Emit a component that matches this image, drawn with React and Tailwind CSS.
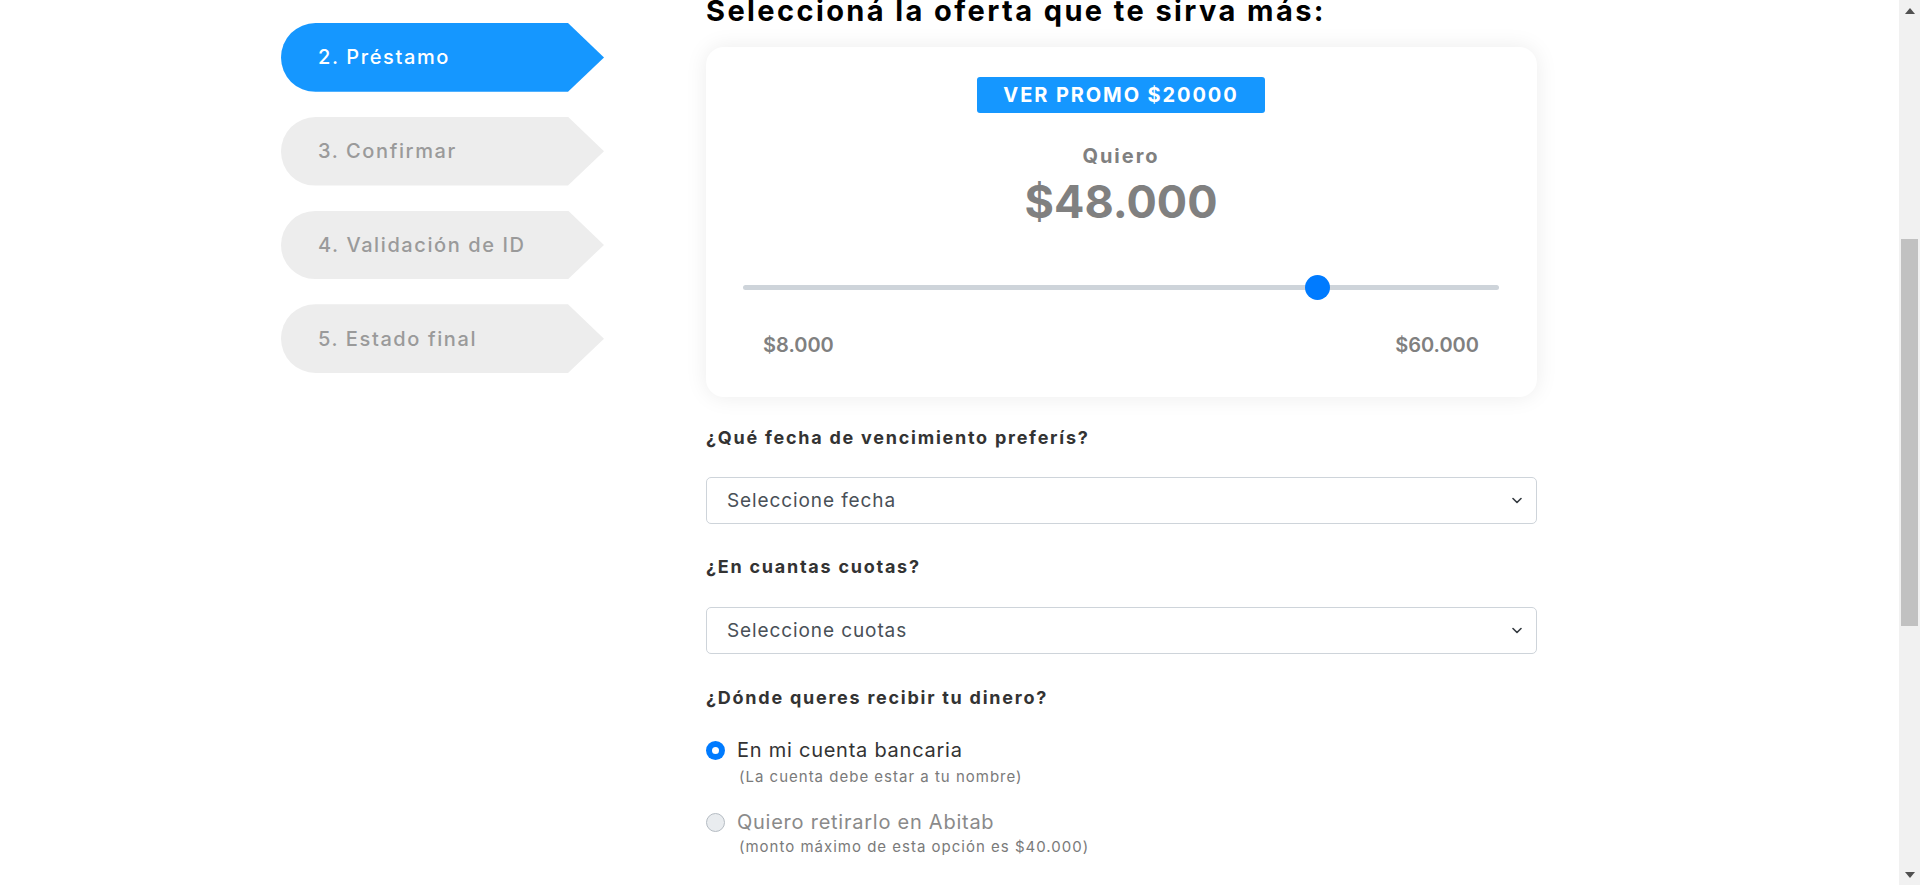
import React from "react";

const FONT = { fontFamily: "Inter, 'Noto Sans', 'DejaVu Sans', sans-serif" };

function Step({ label, active }) {
  return (
    <div
      className={
        "h-[68.75px] w-[323px] rounded-l-full flex items-center pl-[37px] text-[20px] font-medium tracking-[1.6px] [clip-path:polygon(0_0,calc(100%_-_36px)_0,100%_50%,calc(100%_-_36px)_100%,0_100%)] " +
        (active ? "bg-[#1597ff] text-white" : "bg-[#ededed] text-[#9a9a9a]")
      }
    >
      {label}
    </div>
  );
}

function Chevron() {
  return (
    <svg width="10" height="7" viewBox="0 0 10 7" className="shrink-0">
      <path d="M1 1.5 L5 5.5 L9 1.5" fill="none" stroke="#343a40" strokeWidth="1.6" strokeLinecap="round" strokeLinejoin="round" />
    </svg>
  );
}

function Select({ text }) {
  return (
    <div className="h-[47px] w-full rounded-[5px] border border-[#ced4da] bg-white flex items-center justify-between pl-[20px] pr-[14px]">
      <span className="text-[19px] tracking-[0.9px] text-[#495057] leading-[24px]">{text}</span>
      <Chevron />
    </div>
  );
}

function Slider({ value, min, max }) {
  const pct = (value - min) / (max - min);
  return (
    <div className="relative h-[25px] flex items-center">
      <div className="h-[5px] w-full rounded-full bg-[#ced4da]" />
      <div
        className="absolute top-0 h-[25px] w-[25px] rounded-full bg-[#007bff]"
        style={{ left: `calc(${pct} * (100% - 25px))` }}
      />
    </div>
  );
}

export default function App() {
  return (
    <div className="flex h-[885px] w-full overflow-hidden bg-white" style={FONT}>
      <div className="flex-1 flex pl-[281px] overflow-hidden">
        {/* Steps */}
        <div className="w-[323px] shrink-0 pt-[23px] flex flex-col gap-[25px]">
          <Step label="2. Préstamo" active />
          <Step label="3. Confirmar" />
          <Step label="4. Validación de ID" />
          <Step label="5. Estado final" />
        </div>

        {/* Main column */}
        <div className="ml-[102px] w-[831px] shrink-0 mt-[-7px] flex flex-col">
          <h1 className="text-[29px] leading-[35px] font-bold tracking-[2.4px] text-black whitespace-nowrap">
            Seleccioná la oferta que te sirva más:
          </h1>

          <div className="mt-[19px] rounded-[18px] bg-white shadow-[0_0_22px_rgba(0,0,0,0.08)] px-[37px] pr-[38px] pt-[30px] pb-[40px] flex flex-col">
            <div className="mx-auto w-[288px] h-[36px] rounded-[3px] bg-[#1597ff] flex items-center justify-center text-white font-bold text-[20px] tracking-[1.9px]">
              VER PROMO $20000
            </div>
            <div className="mt-[31px] text-center text-[20px] leading-[24px] font-bold tracking-[2px] text-[#808080]">
              Quiero
            </div>
            <div className="mt-[7px] text-center text-[45px] leading-[54px] font-bold text-[#808080]">
              $48.000
            </div>
            <div className="mt-[46px]">
              <Slider value={48000} min={8000} max={60000} />
            </div>
            <div className="mt-[33px] px-[20px] flex justify-between text-[20px] leading-[24px] font-semibold text-[#808080]">
              <span>$8.000</span>
              <span>$60.000</span>
            </div>
          </div>

          <div className="mt-[30px] text-[18px] leading-[22px] font-bold tracking-[1.75px] text-[#333333]">
            ¿Qué fecha de vencimiento preferís?
          </div>
          <div className="mt-[28px]">
            <Select text="Seleccione fecha" />
          </div>

          <div className="mt-[32px] text-[18px] leading-[22px] font-bold tracking-[1.75px] text-[#333333]">
            ¿En cuantas cuotas?
          </div>
          <div className="mt-[29px]">
            <Select text="Seleccione cuotas" />
          </div>

          <div className="mt-[33px] text-[18px] leading-[22px] font-bold tracking-[1.75px] text-[#333333]">
            ¿Dónde queres recibir tu dinero?
          </div>

          <div className="mt-[29px] flex gap-[12px]">
            <div className="mt-[3px] h-[19px] w-[19px] shrink-0 rounded-full bg-[#007bff] flex items-center justify-center">
              <div className="h-[7px] w-[7px] rounded-full bg-white" />
            </div>
            <div className="flex flex-col">
              <span className="text-[20px] leading-[24px] font-normal tracking-[0.75px] text-[#333333]">En mi cuenta bancaria</span>
              <span className="mt-[6px] ml-[2px] text-[15px] leading-[18px] tracking-[1px] text-[#7a7a7a]">(La cuenta debe estar a tu nombre)</span>
            </div>
          </div>

          <div className="mt-[24px] flex gap-[12px]">
            <div className="mt-[3px] h-[19px] w-[19px] shrink-0 rounded-full bg-[#e9ecef] border border-[#b5bcc3]" />
            <div className="flex flex-col">
              <span className="text-[20px] leading-[24px] font-normal tracking-[0.75px] text-[#8a8a8a]">Quiero retirarlo en Abitab</span>
              <span className="mt-[4px] ml-[2px] text-[15px] leading-[18px] tracking-[1px] text-[#7a7a7a]">(monto máximo de esta opción es $40.000)</span>
            </div>
          </div>
        </div>
      </div>

      {/* Scrollbar */}
      <div className="w-[21px] shrink-0 bg-[#f1f1f1] flex flex-col items-center">
        <div className="h-[21px] flex items-center justify-center">
          <svg width="10" height="6" viewBox="0 0 10 6"><path d="M0 6 L5 0 L10 6 Z" fill="#505050" /></svg>
        </div>
        <div className="mt-[218px] h-[387px] w-[17px] bg-[#c1c1c1]" />
        <div className="flex-1" />
        <div className="h-[21px] flex items-center justify-center">
          <svg width="10" height="6" viewBox="0 0 10 6"><path d="M0 0 L5 6 L10 0 Z" fill="#505050" /></svg>
        </div>
      </div>
    </div>
  );
}
